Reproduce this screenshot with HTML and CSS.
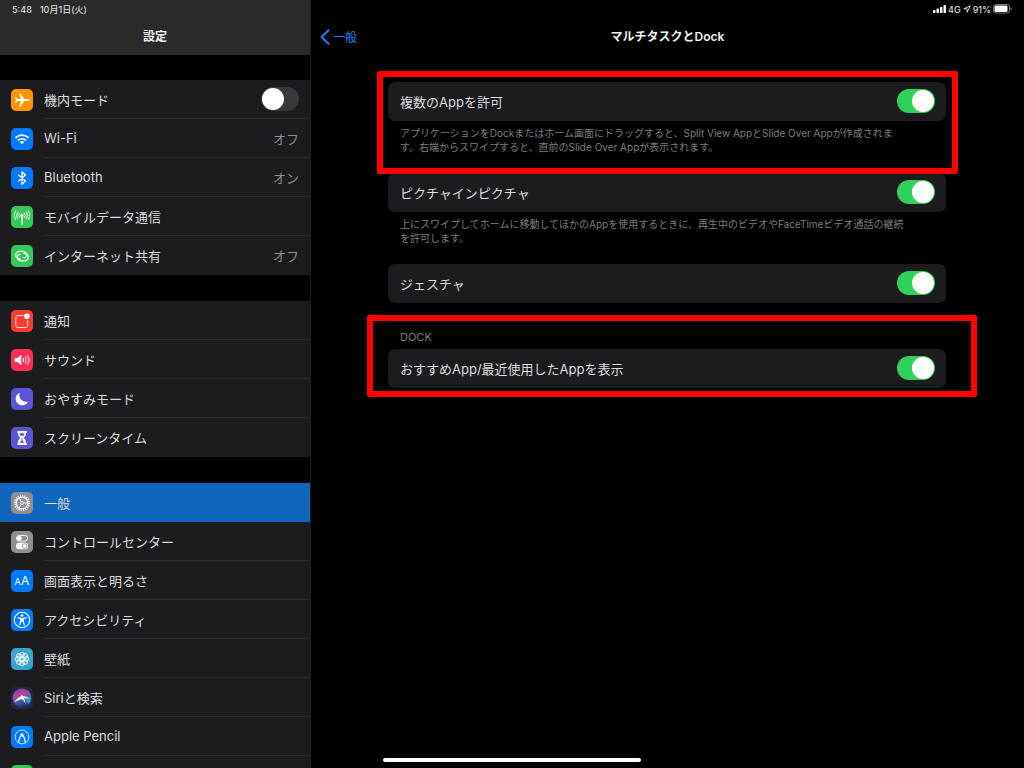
FILE: index.html
```html
<!DOCTYPE html>
<html lang="ja">
<head>
  <meta charset="UTF-8">
  <meta name="viewport" content="width=device-width, initial-scale=1.0">
  <title>設定</title>
  <link rel="stylesheet" href="styles.css">
</head>
<body>
  <div class="layout">

    <!-- Sidebar -->
    <aside class="sidebar">
      <header class="sidebar-header">
        <div class="status-bar">
          <span>5:48</span>
          <span>10月1日(火)</span>
        </div>
        <h1 class="nav-title">設定</h1>
      </header>

      <nav class="menu">
        <div class="menu-group">
          <label class="menu-row" for="airplane">
            <svg class="icon orange" viewBox="0 0 22 22"><path fill="#fff" d="M18.600 11c0-.7-.8-1.100-1.900-1.100h-3.500L9.400 4.400H8.100l1.900 5.500H6.600L5.100 8.100H4L4.900 11 4 13.900h1.100l1.500-1.800H10l-1.900 5.500h1.300l3.800-5.500h3.500c1.100 0 1.900-.4 1.900-1.100z"/></svg>
            <span class="menu-body">機内モード <input type="checkbox" class="switch" id="airplane"></span>
          </label>
          <a class="menu-row" href="#wifi">
            <svg class="icon blue" viewBox="0 0 22 22"><g fill="none" stroke="#fff" stroke-width="1.7"><path d="M4.500 9.800a9.200 9.200 0 0 1 13 0"/><path d="M7 12.400a5.700 5.700 0 0 1 8 0"/></g><path fill="#fff" d="M11 16.300l-2.200-2.300a3.200 3.200 0 0 1 4.400 0z"/></svg>
            <span class="menu-body">Wi-Fi <span class="value">オフ</span></span>
          </a>
          <a class="menu-row" href="#bluetooth">
            <svg class="icon blue" viewBox="0 0 22 22"><path fill="none" stroke="#fff" stroke-width="1.3" stroke-linejoin="round" d="M7.300 7.800l7.200 6.200-3.500 3.200V4.800L14.500 8l-7.200 6.200"/></svg>
            <span class="menu-body">Bluetooth <span class="value">オン</span></span>
          </a>
          <a class="menu-row" href="#cellular">
            <svg class="icon green" viewBox="0 0 22 22"><g fill="none" stroke="#fff" stroke-width=".9" stroke-linecap="round"><path d="M11 9.500v8.500" stroke-width="1.4"/><path d="M8.500 7a3.600 3.600 0 0 0 0 4.600M13.500 7a3.600 3.600 0 0 1 0 4.600M6.600 5.900a5.700 5.700 0 0 0 0 6.800M15.400 5.900a5.700 5.700 0 0 1 0 6.800M4.700 5a7.500 7.500 0 0 0 0 8.600M17.300 5a7.500 7.500 0 0 1 0 8.600"/></g><circle cx="11" cy="9.200" r="1.500" fill="#fff"/></svg>
            <span class="menu-body">モバイルデータ通信</span>
          </a>
          <a class="menu-row" href="#hotspot">
            <svg class="icon green" viewBox="0 0 22 22"><g fill="none" stroke="#fff" stroke-width="1.2" stroke-linecap="round"><path d="M9.300 13.900H8.500a3.800 3.800 0 0 1 0-7.600h3.300a3.800 3.800 0 0 1 3.600 4.800c-.4 1.400-1.700 2-2.700 1.700"/><path d="M12.700 8.300h.8a3.800 3.800 0 0 1 0 7.600h-3.300a3.800 3.800 0 0 1-3.600-4.800c.4-1.400 1.700-2 2.700-1.700"/></g></svg>
            <span class="menu-body">インターネット共有 <span class="value">オフ</span></span>
          </a>
        </div>

        <div class="menu-group">
          <a class="menu-row" href="#notifications">
            <svg class="icon red" viewBox="0 0 22 22"><path fill="none" stroke="#fff" stroke-width=".9" d="M12.500 5.600H6.800a2 2 0 0 0-2 2v7.900a2 2 0 0 0 2 2h7.900a2 2 0 0 0 2-2V9.800"/><circle cx="15.900" cy="6.300" r="2.800" fill="#fff"/></svg>
            <span class="menu-body">通知</span>
          </a>
          <a class="menu-row" href="#sounds">
            <svg class="icon pink" viewBox="0 0 22 22"><path fill="#fff" d="M3.800 9h2.500l4-3.200v10.400l-4-3.200H3.800z"/><g fill="none" stroke="#fff" stroke-width="1" stroke-linecap="round"><path d="M12.200 9.200q1.200 1.800 0 3.600M14.400 7.900q2.100 3.100 0 6.200M16.600 6.700q3.100 4.300 0 8.600"/></g></svg>
            <span class="menu-body">サウンド</span>
          </a>
          <a class="menu-row" href="#dnd">
            <svg class="icon purple" viewBox="0 0 22 22"><path fill="#fff" d="M8.800 4.700a6.500 6.500 0 1 0 8.300 8.700 6.700 6.700 0 0 1-8.300-8.700z"/></svg>
            <span class="menu-body">おやすみモード</span>
          </a>
          <a class="menu-row" href="#screentime">
            <svg class="icon purple" viewBox="0 0 22 22"><path fill="#fff" d="M6.300 4h9.400v2h-.8c0 2.600-.7 3.700-2.400 5 1.700 1.300 2.400 2.400 2.400 5h.8v2H6.300v-2h.8c0-2.600.7-3.700 2.400-5-1.700-1.300-2.400-2.400-2.400-5h-.8z"/><path fill="#5856d6" d="M8.600 6.200h4.800q0 1.500-.8 2.600H9.400q-.8-1.100-.8-2.600zM10.600 11h.8v2.300l2 2.500H8.600l2-2.500z"/></svg>
            <span class="menu-body">スクリーンタイム</span>
          </a>
        </div>

        <div class="menu-group">
          <a class="menu-row selected" href="#general" aria-current="page">
            <svg class="icon gray" viewBox="0 0 22 22"><g fill="none" stroke="#fff"><circle cx="11" cy="11" r="7.300" stroke-width="1.7" stroke-dasharray="1.150 1.143"/><circle cx="11" cy="11" r="5.900" stroke-width="1.3"/><circle cx="11" cy="11" r="1.500" stroke-width=".8"/><path stroke-width=".9" d="M12.500 11h4.200M10.200 9.700L8.200 6.200M10.200 12.300l-2 3.500"/></g></svg>
            <span class="menu-body">一般</span>
          </a>
          <a class="menu-row" href="#control-center">
            <svg class="icon gray" viewBox="0 0 22 22"><rect x="5.400" y="4.400" width="11.200" height="5.800" rx="2.900" fill="none" stroke="#fff" stroke-width=".9"/><circle cx="8.300" cy="7.300" r="2.400" fill="#fff"/><rect x="4.900" y="11.700" width="12.200" height="6.600" rx="3.300" fill="#fff"/><circle cx="13.700" cy="15" r="2.300" fill="none" stroke="#8e8e93" stroke-width=".9"/></svg>
            <span class="menu-body">コントロールセンター</span>
          </a>
          <a class="menu-row" href="#display">
            <svg class="icon blue" viewBox="0 0 22 22"><text x="3.500" y="15.300" class="icon-text small">A</text><text x="10" y="15.300" class="icon-text">A</text></svg>
            <span class="menu-body">画面表示と明るさ</span>
          </a>
          <a class="menu-row" href="#accessibility">
            <svg class="icon blue" viewBox="0 0 22 22"><circle cx="11" cy="11" r="7.700" fill="none" stroke="#fff" stroke-width="1.100"/><circle cx="11" cy="6.500" r="1.300" fill="#fff"/><path fill="none" stroke="#fff" stroke-width="1.200" stroke-linecap="round" stroke-linejoin="round" d="M6.800 8.900l3 .5v2.900L8.700 16M15.200 8.900l-3 .5v2.900l1.100 3.700"/><path fill="#fff" d="M9.500 9h3v4h-3z"/></svg>
            <span class="menu-body">アクセシビリティ</span>
          </a>
          <a class="menu-row" href="#wallpaper">
            <svg class="icon cyan" viewBox="0 0 22 22"><g fill="#fff" fill-opacity=".15" stroke="#fff" stroke-width=".8"><circle cx="11" cy="6.600" r="2.400"/><circle cx="14.100" cy="7.900" r="2.400"/><circle cx="15.400" cy="11" r="2.400"/><circle cx="14.100" cy="14.100" r="2.400"/><circle cx="11" cy="15.400" r="2.400"/><circle cx="7.900" cy="14.100" r="2.400"/><circle cx="6.600" cy="11" r="2.400"/><circle cx="7.900" cy="7.900" r="2.400"/><circle cx="11" cy="11" r="2"/></g></svg>
            <span class="menu-body">壁紙</span>
          </a>
          <a class="menu-row" href="#siri">
            <svg class="icon siri" viewBox="0 0 22 22">
              <defs>
                <linearGradient id="orb" x1="0.3" y1="0" x2="0.6" y2="1">
                  <stop offset="0" stop-color="#6a4a9c"/>
                  <stop offset="0.3" stop-color="#c0409a"/>
                  <stop offset="0.6" stop-color="#4a5fb0"/>
                  <stop offset="1" stop-color="#1d2c66"/>
                </linearGradient>
              </defs>
              <circle cx="11" cy="11" r="9.500" fill="url(#orb)"/>
              <path fill="#35b6c8" fill-opacity=".7" d="M11 9.500q5-1.500 9.200 1.500-.2 4-3.200 6.200-1.500-4.700-6-7.700z"/>
              <path fill="#fff" d="M3 15q3.500-4 7-6l.8-1.200L11.900 9q4 .7 6.600 3-3.500-1.200-5.700-.8 1.700 2.300 1.500 5.300-1.200-3-3.300-4.600-3.500.7-8 3.100z"/>
            </svg>
            <span class="menu-body">Siriと検索</span>
          </a>
          <a class="menu-row" href="#pencil">
            <svg class="icon blue" viewBox="0 0 22 22"><g fill="none" stroke="#fff"><circle cx="11" cy="11" r="6.900" stroke-width=".8"/><path stroke-width="1.200" stroke-linejoin="round" d="M8 16.500V14l2-5 1-1.500L12 9l2 5v2.500"/></g><path fill="#fff" d="M9.600 10.500L11 7.300l1.400 3.200z"/></svg>
            <span class="menu-body">Apple Pencil</span>
          </a>
          <a class="menu-row" href="#more" aria-label="その他">
            <svg class="icon green" viewBox="0 0 22 22"></svg>
            <span class="menu-body"></span>
          </a>
        </div>
      </nav>
    </aside>

    <!-- Detail pane -->
    <main class="detail">
      <header class="detail-header">
        <div class="status-bar status-right">
          <svg width="13" height="8" viewBox="0 0 13 8" fill="#fff"><rect x="0" y="5" width="2.400" height="3" rx=".5"/><rect x="3.500" y="3.500" width="2.400" height="4.500" rx=".5"/><rect x="7" y="2" width="2.400" height="6" rx=".5"/><rect x="10.500" y="0" width="2.400" height="8" rx=".5"/></svg>
          <span>4G</span>
          <svg width="8" height="8" viewBox="0 0 8 8"><path fill="none" stroke="#fff" stroke-width=".8" stroke-linejoin="round" d="M7.300.8L.8 3.800h3.300v3.500z"/></svg>
          <span>91%</span>
          <svg width="19" height="10" viewBox="0 0 19 10"><rect x=".5" y=".5" width="16" height="8.500" rx="2.300" fill="none" stroke="#777"/><rect x="1.500" y="1.500" width="13" height="6.500" rx="1.300" fill="#fff"/><path fill="#777" d="M17.500 3.200q1.300.5 1.300 1.600t-1.300 1.600z"/></svg>
        </div>
        <div class="nav-bar">
          <a class="back" href="#general">
            <svg width="10" height="16" viewBox="0 0 10 16"><path fill="none" stroke="currentColor" stroke-width="2" stroke-linecap="round" stroke-linejoin="round" d="M8.500 1.200L1.500 8l7 6.800"/></svg>
            一般
          </a>
          <h2 class="nav-title">マルチタスクとDock</h2>
        </div>
      </header>

      <div class="settings">
        <section class="setting highlight">
          <label class="card" for="multi-app">複数のAppを許可 <input type="checkbox" class="switch" id="multi-app" checked></label>
          <p class="note">アプリケーションをDockまたはホーム画面にドラッグすると、Split View AppとSlide Over Appが作成されま<br>す。右端からスワイプすると、直前のSlide Over Appが表示されます。</p>
        </section>

        <section class="setting">
          <label class="card" for="pip">ピクチャインピクチャ <input type="checkbox" class="switch" id="pip" checked></label>
          <p class="note">上にスワイプしてホームに移動してほかのAppを使用するときに、再生中のビデオやFaceTimeビデオ通話の継続<br>を許可します。</p>
        </section>

        <section class="setting">
          <label class="card" for="gestures">ジェスチャ <input type="checkbox" class="switch" id="gestures" checked></label>
        </section>

        <section class="setting highlight highlight-wide">
          <h3 class="group-title">DOCK</h3>
          <label class="card" for="recent-apps">おすすめApp/最近使用したAppを表示 <input type="checkbox" class="switch" id="recent-apps" checked></label>
        </section>
      </div>
    </main>
  </div>

  <div class="home-indicator"></div>
</body>
</html>
```
FILE: styles.css
```css
* {
  box-sizing: border-box;
}

body {
  margin: 0;
  background: #000;
  color: #dcdcde;
  font-family: Inter, "Noto Sans CJK JP", sans-serif;
  font-size: 13px;
}

h1, h2, h3, p {
  margin: 0;
}

a {
  color: inherit;
  text-decoration: none;
}

.layout {
  display: flex;
  height: 100vh;
  overflow: hidden;
}

/* Status bar and titles */
.status-bar {
  display: flex;
  align-items: center;
  gap: 8px;
  height: 18px;
  padding: 0 12px;
  font-size: 9px;
  font-weight: 500;
}

.status-right {
  justify-content: flex-end;
  gap: 2px;
}

.nav-title {
  font-size: 12px;
  font-weight: 600;
  line-height: 37px;
  text-align: center;
  color: #f2f2f2;
}

/* Sidebar */
.sidebar {
  flex: 0 0 311px;
  border-right: 1px solid #1c1c1e;
}

.sidebar-header {
  background: #2a2a2b;
}

.menu {
  display: flex;
  flex-direction: column;
  gap: 26px;
  padding-top: 25px;
}

.menu-group {
  background: #1c1c1e;
}

.menu-row {
  display: flex;
  align-items: center;
  gap: 11px;
  padding-left: 11px;
}

.menu-body {
  flex: 1;
  display: flex;
  align-items: center;
  justify-content: space-between;
  height: 39px;
  padding-right: 11px;
  border-bottom: 1px solid #2c2c2f;
}

.menu-row:last-child .menu-body,
.selected .menu-body {
  border-bottom-color: transparent;
}

.selected {
  background: #1065bd;
}

.value {
  color: #8e8e93;
}

/* Icons */
.icon {
  flex: none;
  width: 22px;
  height: 22px;
  border-radius: 5px;
}

.icon-text {
  fill: #fff;
  font-size: 12px;
}

.icon-text.small {
  font-size: 9px;
}

.orange { background: #ff9500; }
.blue { background: #007aff; }
.green { background: #34c759; }
.red { background: #ff3b30; }
.pink { background: #ff2d55; }
.purple { background: #5856d6; }
.gray { background: #8e8e93; }
.cyan { background: #38a5cc; }
.siri { background: #25263f; }

/* Switch */
.switch {
  appearance: none;
  display: flex;
  align-items: center;
  flex: none;
  width: 38px;
  height: 24px;
  margin: 0;
  padding: 1px;
  border-radius: 12px;
  background: #39393d;
}

.switch::before {
  content: "";
  width: 22px;
  height: 22px;
  border-radius: 50%;
  background: #fff;
}

.switch:checked {
  justify-content: flex-end;
  background: #30d158;
}

/* Detail pane */
.detail {
  flex: 1;
}

.nav-bar {
  display: grid;
  grid-template-columns: 1fr auto 1fr;
  align-items: center;
  padding: 0 9px;
}

.back {
  display: flex;
  align-items: center;
  gap: 3px;
  color: #1a7ff0;
  font-size: 12px;
}

.settings {
  display: flex;
  flex-direction: column;
  gap: 18px;
  padding: 27px 78px 0 77px;
}

.card {
  display: flex;
  align-items: center;
  justify-content: space-between;
  height: 39px;
  padding: 0 11px 1px 12px;
  border-radius: 7px;
  background: #1c1c1e;
}

.note {
  margin: 5px 0 1px 12px;
  color: #7c7c82;
  font-size: 10px;
  line-height: 14px;
  white-space: nowrap;
}

.group-title {
  padding: 9px 12px 5px;
  color: #7c7c82;
  font-size: 11px;
  font-weight: 400;
  line-height: 14px;
}

/* Red frame drawn over a section */
.highlight {
  position: relative;
}

.highlight::after {
  content: "";
  position: absolute;
  top: -11px;
  right: -12px;
  bottom: -19px;
  left: -11px;
  border: 6px solid #ff0000;
  border-radius: 2px;
  pointer-events: none;
}

.highlight-wide::after {
  top: -6px;
  right: -31px;
  bottom: -9px;
  left: -21px;
}

.home-indicator {
  position: fixed;
  bottom: 6px;
  left: 50%;
  width: 258px;
  height: 4px;
  margin-left: -129px;
  border-radius: 2px;
  background: #fff;
}
```
